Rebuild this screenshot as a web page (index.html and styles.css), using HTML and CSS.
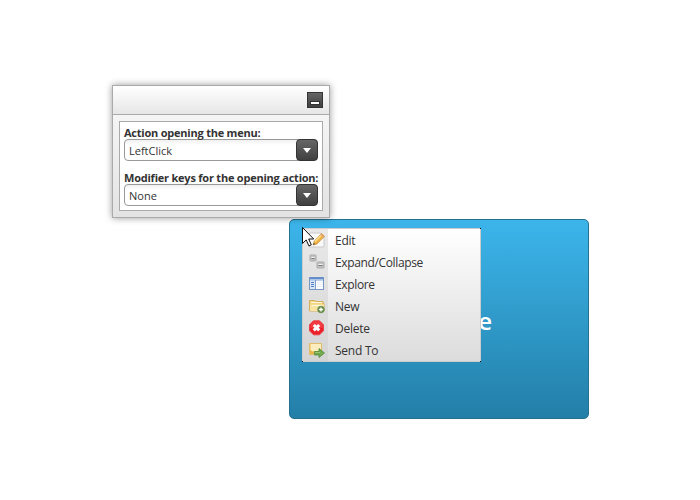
FILE: index.html
```html
<!DOCTYPE html>
<html lang="en">
<head>
<meta charset="utf-8">
<title>Context menu</title>
<link rel="stylesheet" href="styles.css">
</head>
<body>
<main class="stage">
  <section class="panel">
    <header class="panel-head"><button class="minimize" aria-label="Minimize"><i></i></button></header>
    <div class="panel-body">
      <div class="fields">
        <div class="label"><span>Action opening the menu:</span></div>
        <div class="combo"><span>LeftClick</span><b class="drop"><i></i></b></div>
        <div class="label second"><span>Modifier keys for the opening action:</span></div>
        <div class="combo"><span>None</span><b class="drop"><i></i></b></div>
      </div>
    </div>
  </section>
  <section class="target">
    <span class="caption">e</span>
    <ul class="menu">
      <li><svg viewBox="0 0 16 16"><path d="M.5 1h11l3.500 4v10H.5z" fill="#fafafa" stroke="#c9c9cd"/><path d="M4 13l1.300-4L12.500 1.500l3 2.700L8 12z" fill="#efb443" stroke="#c9892f" stroke-width=".7"/><path d="M6 9.500l7-7" stroke="#ffe29a" stroke-width="1.300"/><path d="M12.500 1.500l3 2.700-1.200 1.200-3-2.700z" fill="#dfa06f"/><path d="M4 13l.7-2.300 1.700 1.500z" fill="#655c4c"/></svg><span>Edit</span></li>
      <li><svg viewBox="0 0 16 16"><rect x="1" y="1" width="6" height="6" rx=".5" fill="#c2c2c2" stroke="#aaa"/><rect x="8" y="8" width="7" height="6" rx=".5" fill="#c2c2c2" stroke="#aaa"/><path d="M2.500 3.500h3M9.500 10.500h4" stroke="#f4f4f4"/><path d="M2.500 4.500h3M9.500 11.500h4" stroke="#777"/></svg><span class="tight">Expand/Collapse</span></li>
      <li><svg viewBox="0 0 16 16"><rect x=".5" y="1.500" width="14" height="12" fill="#fff" stroke="#7896c4"/><path d="M1 2.500h13" stroke="#5f8bcb" stroke-width="2"/><path d="M1 4.500h13" stroke="#b9cdec"/><path d="M1 5h5v8H1z" fill="#dce8f8"/><path d="M6.500 4v9" stroke="#7a9bcb"/><path d="M2 6.500h3M2 8.500h3M2 10.500h3" stroke="#4e7fc4"/><path d="M8 6.500h6M8 8.500h6M8 10.500h6" stroke="#e6edf6"/></svg><span class="tight">Explore</span></li>
      <li><svg viewBox="0 0 16 16"><path d="M.5 13V2.500h5L7 3.500h7v2h1V13z" fill="#f2d580" stroke="#d4ae59"/><path d="M1 6.500h14V13H1z" fill="#f7e4a3"/><path d="M2 4.500h11M3 7.500h10" stroke="#fff8d8" fill="none"/><circle cx="12" cy="11.500" r="3.300" fill="#63893f" stroke="#6d9256"/><path d="M9.900 11.500h4.200M12 9.400v4.200" stroke="#fff" stroke-width="1.400"/></svg><span>New</span></li>
      <li><svg viewBox="0 0 16 16"><path d="M4.500.8h6l4 4v6l-4 4h-6l-4-4v-6z" fill="#ed2029" stroke="#e8424a"/><path d="M4.800 1.500h6l3 3v3.200H1.500V4.800z" fill="#f5535a" opacity=".55"/><path d="M4.800 5l5.400 5.400M10.200 5l-5.400 5.400" stroke="#fff" stroke-width="3"/></svg><span>Delete</span></li>
      <li><svg viewBox="0 0 16 16"><path d="M.5 1.500h12v11H.5z" fill="#f6d683" stroke="#e0bd6b"/><path d="M2 2h10v5L9 9H2z" fill="#fbedbd"/><path d="M1 8l4 2 8-2v4H1z" fill="#e7b74c"/><path d="M5.500 9.500h4.500v-3l5.500 4.500-5.500 4.500V13H5.500z" fill="#70aa4d" stroke="#548a3b" stroke-width=".8"/><path d="M6 10.500h5" stroke="#98c678"/></svg><span>Send To</span></li>
    </ul>
  </section>
  <svg class="cursor" viewBox="0 0 12 20"><path d="M.5.500v16l3.700-3.600 2.700 6 2.400-1-2.600-5.900h5z" fill="#fff" stroke="#111"/></svg>
</main>
</body>
</html>
```
FILE: styles.css
```css
* { box-sizing: border-box; }
body { margin: 0; background: #fff; color: #333; font-family: "Open Sans", "Noto Sans", sans-serif; }
.stage { position: relative; width: 700px; height: 500px; overflow: hidden; }
span { white-space: nowrap; }

.panel {
  position: absolute; left: 112px; top: 85px; z-index: 2;
  width: 218px; height: 133px;
  display: flex; flex-direction: column;
  border: 1px solid #aaa;
  background: linear-gradient(#fafafa, #e3e3e3);
  box-shadow: 0 0 7px rgba(0, 0, 0, .4);
}
.panel-head {
  flex: 0 0 29px; display: flex; justify-content: flex-end; padding: 6px;
  border-bottom: 1px solid #aaa;
  background: linear-gradient(#fff, #e6e6e6);
}
.minimize {
  display: flex; align-items: flex-end; justify-content: center;
  width: 16px; height: 16px; padding: 0 0 2px;
  border: 1px solid #333; background: linear-gradient(#666, #404040);
}
.minimize i { width: 10px; height: 4px; border: 1px solid #333; background: #fff; }
.panel-body { flex: 1; padding: 6px; }
.fields { height: 90px; padding: 4px 4px 0; border: 1px solid #aaa; background: #fff; }
.label { display: flex; align-items: center; height: 13px; font-size: 11px; font-weight: 700; line-height: 13px; letter-spacing: -.22px; }
.label.second { margin-top: 10px; }
.combo {
  display: flex; align-items: center; justify-content: space-between;
  height: 22px; padding-left: 4px;
  border: 1px solid #999; border-radius: 4px;
  background: linear-gradient(#f0f0f0, #fff 5px);
  font-size: 11px;
}
.drop {
  display: flex; align-items: center; justify-content: center;
  width: 22px; height: 22px; margin-right: -1px;
  border: 1px solid #333; border-radius: 4px;
  background: linear-gradient(#666, #404040);
}
.drop i { border: 4px solid transparent; border-top: 5px solid #fff; border-bottom: 0; }

.target {
  position: absolute; left: 289px; top: 219px;
  width: 300px; height: 200px;
  border: 1px solid #24708f; border-radius: 5px;
  background: linear-gradient(#3cb5eb, #237fa8);
}
.caption { position: absolute; right: 96px; top: 84px; color: #fff; font-size: 24px; font-weight: 600; line-height: 34px; }
.menu {
  position: absolute; left: 12px; top: 8px;
  width: 179px; height: 134px; margin: 0; padding: 0;
  list-style: none; border: 1px solid #ccc;
  background: linear-gradient(90deg, rgba(200, 200, 200, .4) 25px, transparent 25px), linear-gradient(#fff, #dcdcdc);
}
.menu::before {
  content: ""; position: absolute; inset: -1px;
  background:
    linear-gradient(#111, #111) 0 0 / 1px 1px,
    linear-gradient(#111, #111) 100% 0 / 1px 1px,
    linear-gradient(#111, #111) 0 100% / 1px 1px,
    linear-gradient(#111, #111) 100% 100% / 1px 1px;
  background-repeat: no-repeat;
}
.menu li { display: flex; align-items: center; height: 22px; padding-left: 6px; gap: 10px; font-size: 12px; letter-spacing: -.25px; }
.menu .tight { letter-spacing: -.36px; }
.menu svg { width: 16px; height: 16px; flex: none; }
.cursor { position: absolute; left: 302px; top: 227px; width: 12px; height: 20px; z-index: 3; }
```
